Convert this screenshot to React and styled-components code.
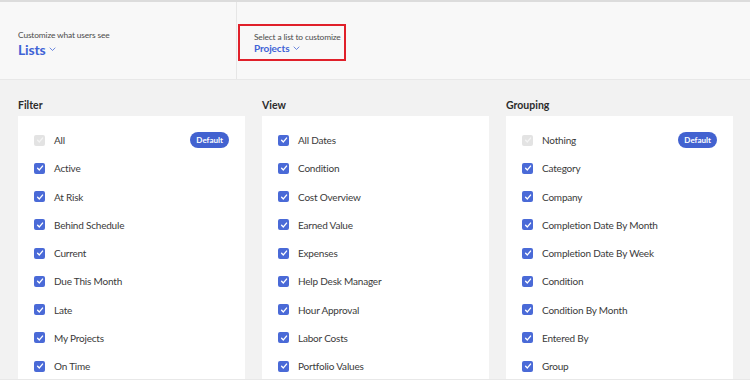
import React from "react";
import styled, { createGlobalStyle } from "styled-components";

const GlobalStyle = createGlobalStyle`
  html, body {
    margin: 0;
    padding: 0;
    background: #ffffff;
    font-family: "Lato", "Open Sans", sans-serif;
    color: #323232;
  }
`;

const Page = styled.div`
  width: 750px;
  border-top: 2px solid #dcdcdc;
`;

const Header = styled.div`
  display: flex;
  height: 77px;
  background: #f8f8f8;
  border-bottom: 1px solid #e8e8e8;
`;

const HeaderSection = styled.div`
  width: 237px;
  border-right: 1px solid #e6e6e6;
  padding: 28px 0 0 18px;
  box-sizing: border-box;
`;

const Highlight = styled.div`
  margin: 22px 0 0 1px;
  width: 108px;
  height: 37px;
  box-sizing: border-box;
  border: 2px solid #e0202a;
  padding: 6px 0 0 14px;
  white-space: nowrap;
`;

const SmallLabel = styled.div`
  font-size: 8.4px;
  letter-spacing: -0.15px;
  color: #4b4b4b;
  line-height: 11px;
  white-space: nowrap;
`;

const Picker = styled.div`
  display: flex;
  align-items: center;
  gap: ${(p) => (p.$big ? 4 : 4)}px;
  color: #3f63d6;
  font-weight: 700;
  font-size: ${(p) => (p.$big ? 14 : 10)}px;
  letter-spacing: ${(p) => (p.$big ? "-0.2px" : "-0.1px")};
  line-height: ${(p) => (p.$big ? 17 : 11)}px;
`;

const Chevron = ({ size = 7 }) => (
  <svg width={size} height={size * 0.6} viewBox="0 0 10 6">
    <path d="M1 1 L5 5 L9 1" fill="none" stroke="#3f63d6" strokeWidth="1.1" />
  </svg>
);

const Body = styled.div`
  background: #f2f2f2;
  display: grid;
  grid-template-columns: repeat(3, 227px);
  column-gap: 17px;
  padding: 0 16px 0 18px;
  height: 299px;
  border-bottom: 1px solid #e8e8e8;
  overflow: hidden;
`;

const Column = styled.div`
  display: flex;
  flex-direction: column;
`;

const Heading = styled.h3`
  margin: 0;
  padding: 19px 0 0 0;
  height: 36px;
  box-sizing: border-box;
  font-size: 10.5px;
  line-height: 12px;
  font-weight: 700;
  color: #2c2c2c;
`;

const Card = styled.div`
  background: #ffffff;
  flex: 1;
  padding: 10px 16px 0 16px;
`;

const Row = styled.div`
  display: flex;
  align-items: center;
  height: 28.25px;
  font-size: 10px;
  letter-spacing: -0.2px;
  color: #3a3a3a;
`;

const Box = styled.span`
  width: 11px;
  height: 11px;
  border-radius: 2px;
  background: ${(p) => (p.$disabled ? "#e3e3e3" : "#4a6ad7")};
  display: flex;
  align-items: center;
  justify-content: center;
  margin-right: 9px;
  flex: none;
`;

const Label = styled.span`
  flex: 1;
`;

const Badge = styled.span`
  background: #4262d0;
  color: #ffffff;
  font-weight: 700;
  font-size: 8px;
  letter-spacing: 0;
  height: 16px;
  padding: 0 6px;
  border-radius: 8px;
  display: flex;
  align-items: center;
`;

const Check = ({ disabled }) => (
  <svg width="8" height="8" viewBox="0 0 10 10">
    <path
      d="M2 5.3 L4.2 7.4 L8.2 2.6"
      fill="none"
      stroke={disabled ? "#f4f4f4" : "#ffffff"}
      strokeWidth="1.7"
      strokeLinecap="round"
      strokeLinejoin="round"
    />
  </svg>
);

const columns = [
  {
    title: "Filter",
    items: ["All", "Active", "At Risk", "Behind Schedule", "Current", "Due This Month", "Late", "My Projects", "On Time"],
    default: true,
  },
  {
    title: "View",
    items: ["All Dates", "Condition", "Cost Overview", "Earned Value", "Expenses", "Help Desk Manager", "Hour Approval", "Labor Costs", "Portfolio Values"],
    default: false,
  },
  {
    title: "Grouping",
    items: ["Nothing", "Category", "Company", "Completion Date By Month", "Completion Date By Week", "Condition", "Condition By Month", "Entered By", "Group"],
    default: true,
  },
];

export default function App() {
  return (
    <Page>
      <GlobalStyle />
      <Header>
        <HeaderSection>
          <SmallLabel>Customize what users see</SmallLabel>
          <Picker $big>
            Lists <Chevron size={7} />
          </Picker>
        </HeaderSection>
        <Highlight>
          <SmallLabel>Select a list to customize</SmallLabel>
          <Picker>
            Projects <Chevron size={7} />
          </Picker>
        </Highlight>
      </Header>
      <Body>
        {columns.map((col) => (
          <Column key={col.title}>
            <Heading>{col.title}</Heading>
            <Card>
              {col.items.map((item, i) => {
                const locked = col.default && i === 0;
                return (
                  <Row key={item}>
                    <Box $disabled={locked}>
                      <Check disabled={locked} />
                    </Box>
                    <Label>{item}</Label>
                    {locked && <Badge>Default</Badge>}
                  </Row>
                );
              })}
            </Card>
          </Column>
        ))}
      </Body>
    </Page>
  );
}
